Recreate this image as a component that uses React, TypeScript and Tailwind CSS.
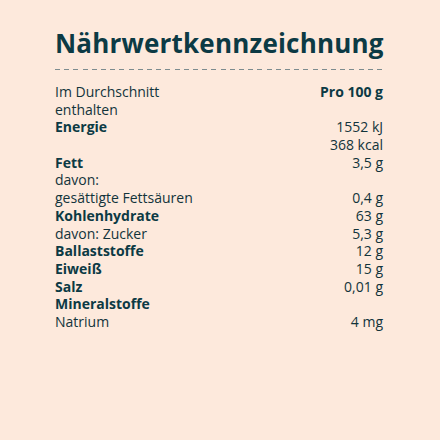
import React from "react";

type Row = { label: string; value?: string; bold?: boolean; valueBold?: boolean };

const rows: Row[] = [
  { label: "Im Durchschnitt", value: "Pro 100 g", valueBold: true },
  { label: "enthalten" },
  { label: "Energie", value: "1552 kJ", bold: true },
  { label: "", value: "368 kcal" },
  { label: "Fett", value: "3,5 g", bold: true },
  { label: "davon:" },
  { label: "gesättigte Fettsäuren", value: "0,4 g" },
  { label: "Kohlenhydrate", value: "63 g", bold: true },
  { label: "davon: Zucker", value: "5,3 g" },
  { label: "Ballaststoffe", value: "12 g", bold: true },
  { label: "Eiweiß", value: "15 g", bold: true },
  { label: "Salz", value: "0,01 g", bold: true },
  { label: "Mineralstoffe", bold: true },
  { label: "Natrium", value: "4 mg" },
];

export default function App() {
  return (
    <div
      className="w-[440px] h-[440px] bg-[#fde9dc] text-[#0c3a44] pl-[55px] pr-[57px] pt-[27px]"
      style={{ fontFamily: '"Open Sans", "Noto Sans", sans-serif' }}
    >
      <h1 className="text-[26px] font-bold leading-[32px] tracking-[0.2px]">Nährwertkennzeichnung</h1>
      <div className="mt-[10px] h-px w-[328px] bg-[repeating-linear-gradient(90deg,#7d8c8f_0px,#7d8c8f_5px,transparent_5px,transparent_9.2px)]" />
      <div className="mt-[13px] flex flex-col text-[14px] leading-[17.7px] text-[#12343b]">
        {rows.map((r, i) => (
          <div key={i} className="flex justify-between h-[17.7px]">
            <span className={r.bold ? "font-bold text-[#0c3a44]" : ""}>{r.label}</span>
            {r.value ? <span className={r.valueBold ? "font-bold text-[#0c3a44]" : ""}>{r.value}</span> : null}
          </div>
        ))}
      </div>
    </div>
  );
}
